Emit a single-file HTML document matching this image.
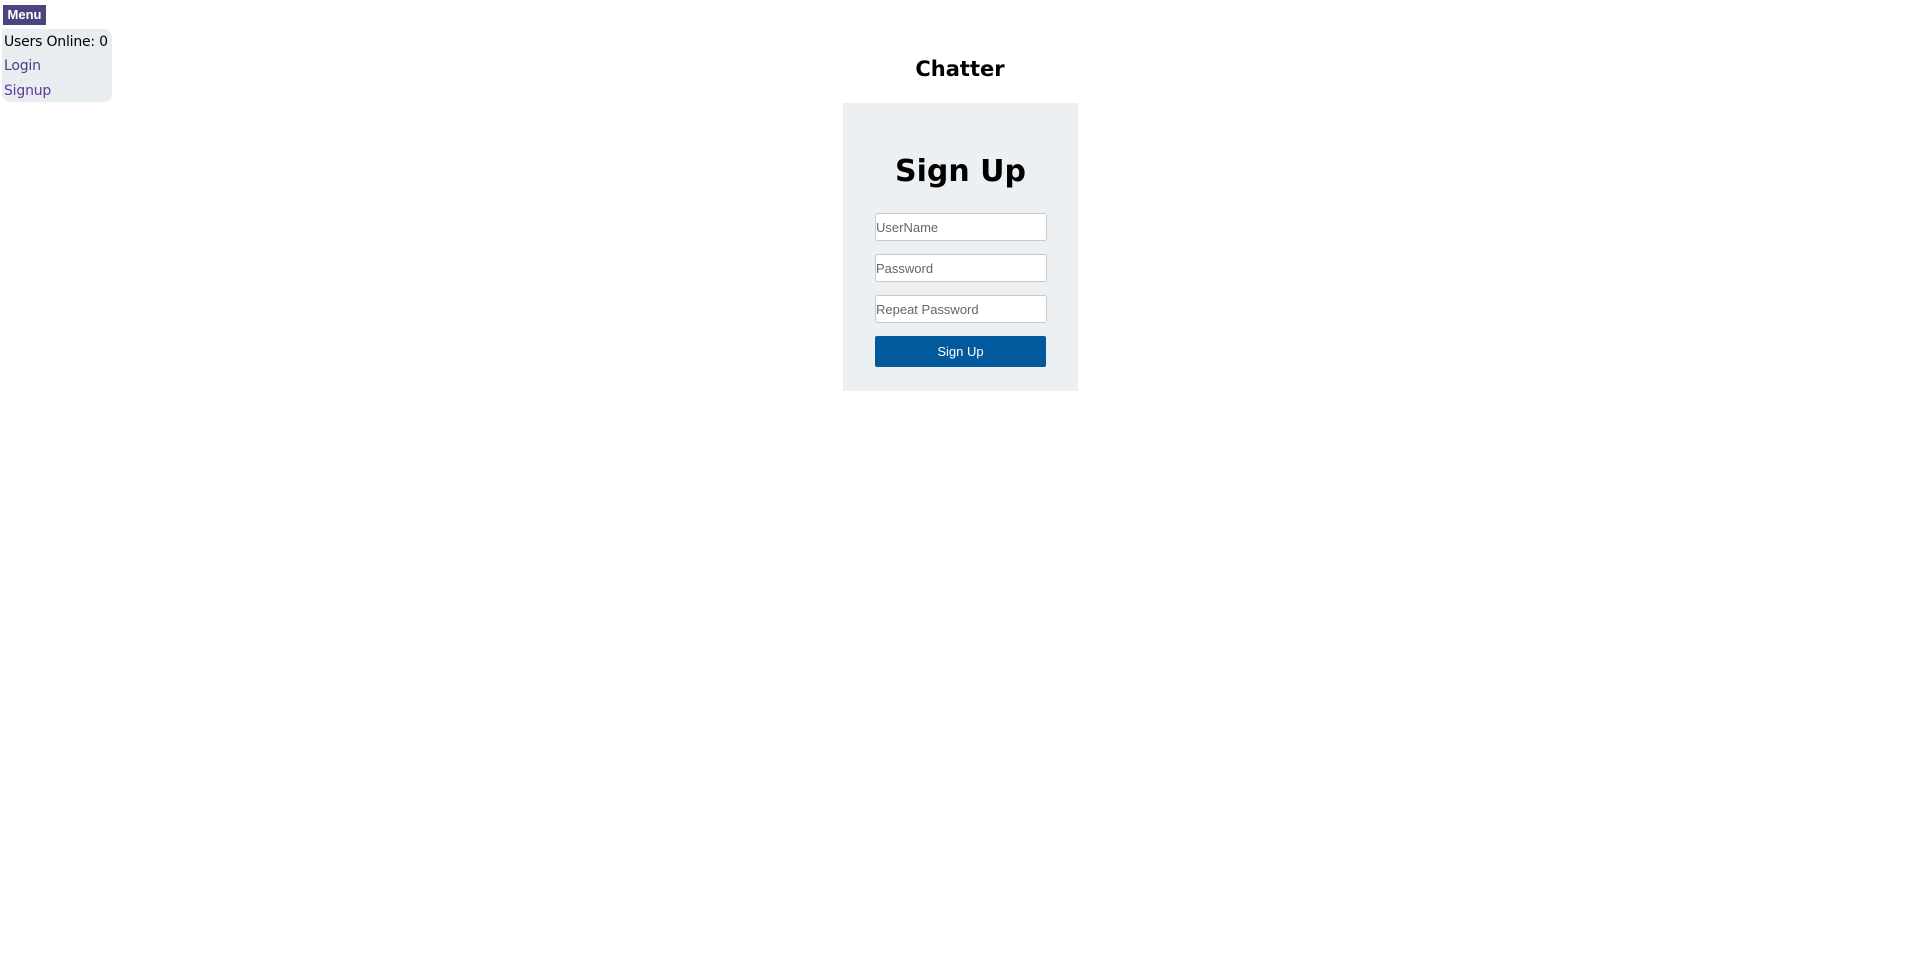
<!DOCTYPE html>
<html><head><style>
body{margin:0;background:#fff;font-family:"DejaVu Sans","Liberation Sans",sans-serif;}
.menu{position:absolute;left:3px;top:5px;width:43px;height:20px;background:#4b4580;color:#fff;font:bold 13px "Liberation Sans",sans-serif;line-height:20px;text-align:center;}
.panel{position:absolute;left:2px;top:29px;width:110px;height:73px;background:#e8eef0;border-radius:0 8px 8px 8px;font-size:14px;letter-spacing:-0.2px;}
.panel div{position:absolute;left:2px;white-space:nowrap;}
h1{position:absolute;left:0;width:1920px;top:54px;margin:0;text-align:center;font-size:21px;font-weight:bold;line-height:30px;}
.card{position:absolute;left:843px;top:103px;width:235px;height:288px;background:#edf0f3;}
.t{position:absolute;width:235px;text-align:center;font-size:30px;font-weight:bold;top:47px;line-height:44px;}
.in{position:absolute;left:32px;width:170px;height:26px;background:#fff;border:1px solid #c8c8c8;border-radius:3px;font:13px "Liberation Sans",sans-serif;color:#666;line-height:27px;}
.btn{position:absolute;left:32px;top:233px;width:171px;height:31px;background:#025a9c;border-radius:2px;color:#fff;font:13px "Liberation Sans",sans-serif;text-align:center;line-height:31px;}
</style></head><body>
<div class="menu">Menu</div>
<div class="panel"><div style="top:5px">Users Online: 0</div><div style="top:29px;color:#4b3a8c">Login</div><div style="top:54px;color:#5b3a9c">Signup</div></div>
<h1>Chatter</h1>
<div class="card">
<div class="t">Sign Up</div>
<div class="in" style="top:110px">UserName</div>
<div class="in" style="top:151px">Password</div>
<div class="in" style="top:192px">Repeat Password</div>
<div class="btn">Sign Up</div>
</div>
</body></html>
